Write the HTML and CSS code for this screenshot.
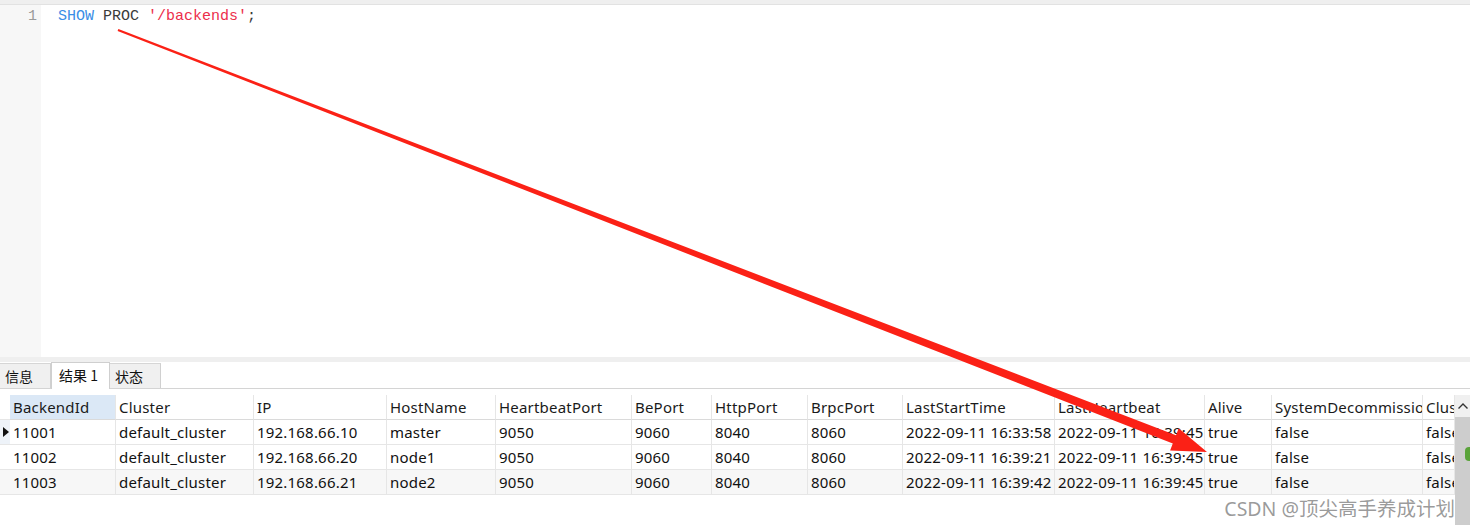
FILE: index.html
```html
<!DOCTYPE html>
<html lang="zh">
<head>
<meta charset="utf-8">
<title>SHOW PROC backends</title>
<link rel="stylesheet" href="styles.css">
</head>
<body>
<div class="app">
  <div class="topbar"></div>
  <div class="editor">
    <div class="gutter"><span class="lineno">1</span></div>
    <div class="code"><span class="kw">SHOW</span> <span class="id">PROC</span> <span class="str">'/backends'</span><span class="id">;</span></div>
  </div>
  <div class="splitter"></div>
  <div class="tabs">
    <div class="tab">信息</div>
    <div class="tab active">结果 1</div>
    <div class="tab">状态</div>
  </div>
  <div class="result">
    <div class="grid">
      <div class="ind"></div>
      <div class="hd sel">BackendId</div>
      <div class="hd">Cluster</div>
      <div class="hd">IP</div>
      <div class="hd">HostName</div>
      <div class="hd">HeartbeatPort</div>
      <div class="hd">BePort</div>
      <div class="hd">HttpPort</div>
      <div class="hd">BrpcPort</div>
      <div class="hd">LastStartTime</div>
      <div class="hd">LastHeartbeat</div>
      <div class="hd">Alive</div>
      <div class="hd">SystemDecommissioned</div>
      <div class="hd">ClusterDecommissioned</div>

      <div class="ind cur"><span class="tri"></span></div>
      <div class="c">11001</div><div class="c">default_cluster</div><div class="c">192.168.66.10</div><div class="c">master</div><div class="c">9050</div><div class="c">9060</div><div class="c">8040</div><div class="c">8060</div><div class="c">2022-09-11 16:33:58</div><div class="c">2022-09-11 16:39:45</div><div class="c">true</div><div class="c">false</div><div class="c">false</div>

      <div class="ind"></div>
      <div class="c">11002</div><div class="c">default_cluster</div><div class="c">192.168.66.20</div><div class="c">node1</div><div class="c">9050</div><div class="c">9060</div><div class="c">8040</div><div class="c">8060</div><div class="c">2022-09-11 16:39:21</div><div class="c">2022-09-11 16:39:45</div><div class="c">true</div><div class="c">false</div><div class="c">false</div>

      <div class="ind alt"></div>
      <div class="c alt">11003</div><div class="c alt">default_cluster</div><div class="c alt">192.168.66.21</div><div class="c alt">node2</div><div class="c alt">9050</div><div class="c alt">9060</div><div class="c alt">8040</div><div class="c alt">8060</div><div class="c alt">2022-09-11 16:39:42</div><div class="c alt">2022-09-11 16:39:45</div><div class="c alt">true</div><div class="c alt">false</div><div class="c alt">false</div>
    </div>
    <div class="vscroll">
      <div class="up"><svg width="12" height="8" viewBox="0 0 12 8"><path d="M1.5 6.5 L6 2 L10.5 6.5" fill="none" stroke="#333" stroke-width="1.4"/></svg></div>
      <div class="thumb"><span class="blob"></span></div>
    </div>
  </div>
</div>

<svg class="arrow" width="1470" height="525" viewBox="0 0 1470 525">
  <polygon fill="#fb2116" points="117.6,30.9 118.4,29.1 1176.0,435.2 1178.7,428.2 1207,452 1170.1,450.6 1172.8,443.6"/>
</svg>

<div class="watermark">CSDN @顶尖高手养成计划</div>
</body>
</html>
```

FILE: styles.css
```css
html, body {
  margin: 0;
  padding: 0;
}
body {
  width: 1470px;
  height: 525px;
  overflow: hidden;
  background: #ffffff;
  position: relative;
  font-family: "Noto Sans", "Noto Sans CJK SC", sans-serif;
  color: #111;
}
.app {
  display: flex;
  flex-direction: column;
  height: 525px;
}
.topbar {
  height: 4px;
  background: #efefef;
  border-bottom: 1px solid #e2e2e2;
}
.editor {
  display: flex;
  height: 352px;
}
.gutter {
  width: 41px;
  background: #f7f7f7;
  display: flex;
  justify-content: flex-end;
}
.lineno {
  font-family: "Liberation Mono", monospace;
  font-size: 15px;
  color: #9a9a9a;
  padding-right: 4px;
  line-height: 22px;
  margin-top: 1px;
}
.code {
  padding-left: 17px;
  font-family: "Liberation Mono", monospace;
  font-size: 15px;
  line-height: 22px;
  margin-top: 1px;
  white-space: pre;
}
.kw { color: #3a8ee6; }
.id { color: #3a3a3a; }
.str { color: #ec2e4b; }

.splitter {
  height: 5px;
  background: #efefef;
}
.tabs {
  display: flex;
  height: 26px;
  border-bottom: 1px solid #d4d4d4;
  align-items: flex-end;
  font-family: "Noto Sans CJK SC", sans-serif;
  font-size: 14px;
}
.tab {
  height: 25px;
  line-height: 25px;
  padding: 0 0 0 5px;
  background: #f0f0f0;
  border-right: 1px solid #d0d0d0;
  border-top: 1px solid #d6d6d6;
  box-sizing: border-box;
  color: #111;
}
.tab:nth-child(1) { width: 51px; }
.tab:nth-child(3) { width: 51px; }
.tab.active {
  width: 59px;
  height: 27px;
  background: #ffffff;
  border: 1px solid #cfcfcf;
  border-bottom: none;
  margin-bottom: -1px;
  padding-left: 7px;
  line-height: 24px;
}
.result {
  display: flex;
  padding-top: 6px;
  flex: 1;
  min-height: 0;
}
.grid {
  display: grid;
  grid-template-columns: 10px 106px 138px 133px 109px 136px 80px 96px 95px 152px 150px 67px 151px 32px;
  grid-auto-rows: 25px;
  align-content: start;
  width: 1455px;
  font-size: 15px;
  letter-spacing: 0.2px;
}
.hd, .c {
  padding-left: 3px;
  line-height: 24px;
  white-space: nowrap;
  overflow: hidden;
  border-right: 1px solid #e6e6e6;
  border-bottom: 1px solid #e6e6e6;
  box-sizing: border-box;
}
.hd {
  border-bottom: 1px solid #dadada;
  color: #1a1a1a;
}
.hd.sel {
  background: #dbe8f6;
}
.c.alt, .ind.alt {
  background: #f7f7f7;
}
.ind {
  border-bottom: 1px solid #e6e6e6;
  box-sizing: border-box;
  display: flex;
  align-items: center;
  justify-content: center;
}
.ind.cur {
  background: #eef3f9;
}
.tri {
  width: 0;
  height: 0;
  border-top: 5px solid transparent;
  border-bottom: 5px solid transparent;
  border-left: 6px solid #111;
  margin-left: 1px;
}
.vscroll {
  width: 15px;
  display: flex;
  flex-direction: column;
  background: #f0f0f0;
}
.up {
  height: 22px;
  display: flex;
  align-items: center;
  justify-content: center;
  background: #f0f0f0;
}
.thumb {
  flex: 1;
  background: #cdcdcd;
  position: relative;
}
.blob {
  position: absolute;
  right: 0;
  top: 30px;
  width: 5px;
  height: 14px;
  background: #5aa33a;
  border-radius: 4px 0 0 4px;
}
.arrow {
  position: absolute;
  left: 0;
  top: 0;
  pointer-events: none;
}
.watermark {
  position: absolute;
  right: 15px;
  top: 493px;
  font-family: "Noto Sans", "Noto Sans CJK SC", sans-serif;
  font-size: 19.5px;
  color: rgba(110, 110, 110, 0.7);
  white-space: nowrap;
}
```
